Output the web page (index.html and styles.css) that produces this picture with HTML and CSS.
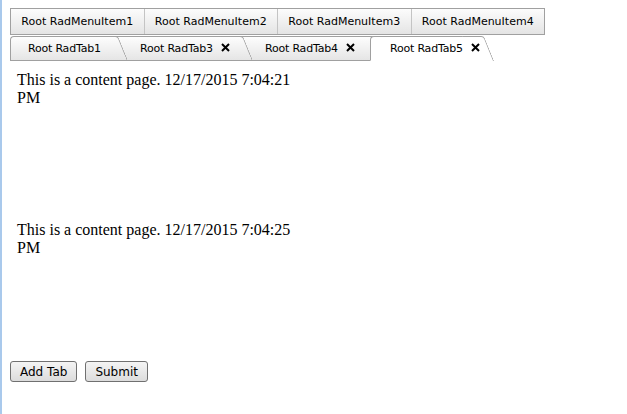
FILE: index.html
```html
<!DOCTYPE html>
<html lang="en">
<head>
    <meta charset="UTF-8">
    <title>RadTabStrip demo</title>
    <link rel="stylesheet" href="styles.css">
</head>
<body>
    <div class="menu">
        <div class="menu-item">Root RadMenuItem1</div>
        <div class="menu-item">Root RadMenuItem2</div>
        <div class="menu-item">Root RadMenuItem3</div>
        <div class="menu-item">Root RadMenuItem4</div>
    </div>

    <div class="tabstrip">
        <div class="tab tab-first"><span>Root RadTab1</span></div>
        <div class="tab tab-second">
            <span>Root RadTab3</span>
            <svg class="close" width="9" height="9" viewBox="0 0 9 9"><path d="M1 1L8 8M8 1L1 8" stroke="#000" stroke-width="2"/></svg>
        </div>
        <div class="tab tab-third">
            <span>Root RadTab4</span>
            <svg class="close" width="9" height="9" viewBox="0 0 9 9"><path d="M1 1L8 8M8 1L1 8" stroke="#000" stroke-width="2"/></svg>
        </div>
        <div class="tab tab-selected">
            <span>Root RadTab5</span>
            <svg class="close" width="9" height="9" viewBox="0 0 9 9"><path d="M1 1L8 8M8 1L1 8" stroke="#000" stroke-width="2"/></svg>
        </div>
    </div>

    <div class="pageview">This is a content page. 12/17/2015 7:04:21 PM</div>
    <div class="pageview">This is a content page. 12/17/2015 7:04:25 PM</div>

    <div class="buttons">
        <button class="btn">Add Tab</button>
        <button class="btn">Submit</button>
    </div>
</body>
</html>
```

FILE: styles.css
```css
html {
    border-left: 2px solid #a9c9ec;
    min-height: 100%;
    box-sizing: border-box;
}

body {
    margin: 8px;
    font-family: 'Liberation Serif', serif;
    font-size: 16px;
    color: #000;
}

/* menu */
.menu {
    display: flex;
    width: 533px;
    height: 25px;
    border: 1px solid #a0a0a0;
    background: linear-gradient(#fcfcfc, #e4e4e4);
    font-family: 'DejaVu Sans', sans-serif;
    font-size: 11px;
}

.menu-item {
    flex: 1;
    display: flex;
    align-items: center;
    justify-content: center;
    border-left: 1px solid #c4c4c4;
}

.menu-item:first-child {
    border-left: none;
}

/* tabs */
.tabstrip {
    display: flex;
    height: 25px;
    margin-top: 1px;
    font-family: 'DejaVu Sans', sans-serif;
    font-size: 11px;
    letter-spacing: -0.2px;
}

.tab {
    position: relative;
    box-sizing: border-box;
    flex: none;
    height: 25px;
    display: flex;
    align-items: center;
    gap: 8px;
    padding-left: 31px;
    white-space: nowrap;
    background: linear-gradient(#fdfdfd, #e5e5e5);
    border: 1px solid #a0a0a0;
    border-right: none;
    border-radius: 4px 0 0 0;
}

/* slanted right edge, drawn over the next tab */
.tab::after {
    content: '';
    position: absolute;
    top: -1px;
    right: -10px;
    width: 22px;
    height: 25px;
    background: linear-gradient(#fdfdfd, #e5e5e5);
    border-top: 1px solid #a0a0a0;
    border-right: 1px solid #a0a0a0;
    border-bottom: 1px solid #a0a0a0;
    border-top-right-radius: 3px;
    transform: skewX(22deg);
    transform-origin: top left;
    box-sizing: border-box;
}

.tab span,
.tab .close {
    position: relative;
    z-index: 1;
    flex: none;
}

.tab-first {
    width: 98px;
    padding-left: 17px;
    z-index: 4;
}

.tab-second {
    width: 125px;
    z-index: 3;
}

.tab-third {
    width: 137px;
    z-index: 2;
}

.tab-selected {
    width: 104px;
    padding-left: 19px;
    z-index: 5;
    background: #fff;
    border-bottom-color: #fff;
}

.tab-selected::after {
    background: #fff;
    border-bottom: none;
}

.close {
    margin-top: -2px;
}

/* content */
.pageview {
    box-sizing: border-box;
    width: 310px;
    height: 150px;
    padding: 10px 7px;
}

.buttons {
    display: flex;
    gap: 8px;
}

.btn {
    height: 21px;
    padding: 0 9px;
    font-family: 'DejaVu Sans', sans-serif;
    font-size: 12px;
    color: #000;
    background: linear-gradient(#f4f4f4, #dcdcdc);
    border: 1px solid #707070;
    border-radius: 3px;
}
```
